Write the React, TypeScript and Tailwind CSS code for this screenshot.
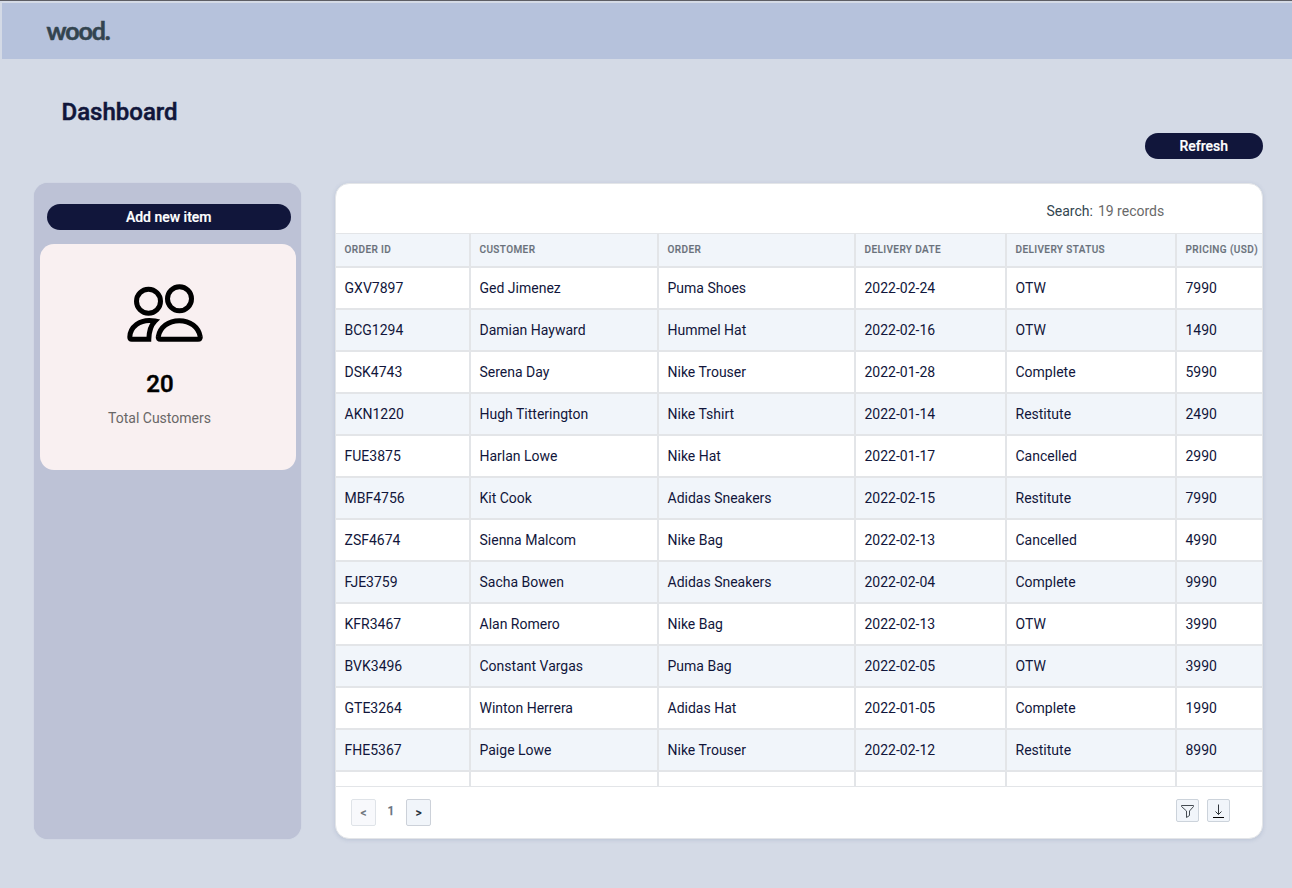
import React from "react";

const cols = ["ORDER ID", "CUSTOMER", "ORDER", "DELIVERY DATE", "DELIVERY STATUS", "PRICING (USD)"];

const rows = [
  ["GXV7897", "Ged Jimenez", "Puma Shoes", "2022-02-24", "OTW", "7990"],
  ["BCG1294", "Damian Hayward", "Hummel Hat", "2022-02-16", "OTW", "1490"],
  ["DSK4743", "Serena Day", "Nike Trouser", "2022-01-28", "Complete", "5990"],
  ["AKN1220", "Hugh Titterington", "Nike Tshirt", "2022-01-14", "Restitute", "2490"],
  ["FUE3875", "Harlan Lowe", "Nike Hat", "2022-01-17", "Cancelled", "2990"],
  ["MBF4756", "Kit Cook", "Adidas Sneakers", "2022-02-15", "Restitute", "7990"],
  ["ZSF4674", "Sienna Malcom", "Nike Bag", "2022-02-13", "Cancelled", "4990"],
  ["FJE3759", "Sacha Bowen", "Adidas Sneakers", "2022-02-04", "Complete", "9990"],
  ["KFR3467", "Alan Romero", "Nike Bag", "2022-02-13", "OTW", "3990"],
  ["BVK3496", "Constant Vargas", "Puma Bag", "2022-02-05", "OTW", "3990"],
  ["GTE3264", "Winton Herrera", "Adidas Hat", "2022-01-05", "Complete", "1990"],
  ["FHE5367", "Paige Lowe", "Nike Trouser", "2022-02-12", "Restitute", "8990"],
  ["", "", "", "", "", ""],
];

const grid = "grid grid-cols-[135px_188px_197px_151px_170px_1fr]";
const cell = "flex items-center whitespace-nowrap border-r-2 border-[#e3e5e8] pl-[8.5px] last:border-r-0";

function PeopleIcon() {
  return (
    <svg width="78" height="60" viewBox="0 0 78 60" fill="none" stroke="#000" strokeWidth="5" strokeLinejoin="round">
      <circle cx="22.5" cy="17.3" r="12" />
      <circle cx="53.5" cy="14.7" r="12" />
      <path d="M29 37C13 34 4 44 3.8 53c0 1.500.8 2.300 2 2.300h17C23 48 25 41 29 37Z" strokeLinejoin="miter" />
      <path d="M34.500 55.300h37.500c1.800 0 2.600-1 2.200-2.700C72.500 43 64 36.700 53.300 36.700S34 43 32.300 52.600c-.4 1.700.4 2.700 2.200 2.700Z" />
    </svg>
  );
}

export default function App() {
  return (
    <div className="flex h-[888px] w-[1292px] flex-col overflow-hidden border-t border-[#5d5e65] bg-[#d4dae6] font-['Roboto',sans-serif] text-[#11163b]">
      <header className="ml-0.5 mt-0.5 flex h-14 shrink-0 items-center bg-[#b6c2dc] pl-[44.5px]">
        <span className="-mt-0.5 font-['Lato',sans-serif] text-[25px] font-bold leading-none tracking-[-1.1px] text-[#33444f] [-webkit-text-stroke:0.5px]">wood.</span>
      </header>
      <h1 className="ml-[61.5px] mt-[37px] h-8 text-2xl font-medium leading-8 [-webkit-text-stroke:0.5px]">Dashboard</h1>
      <div className="mt-[5px] flex justify-end pr-[29.5px]">
        <button className="h-[26px] w-[117.5px] rounded-full bg-[#11163b] text-sm font-medium text-white [-webkit-text-stroke:0.2px]">Refresh</button>
      </div>
      <main className="mt-6 flex gap-[34px] pl-[34px]">
        <aside className="flex h-[656px] w-[267px] flex-col rounded-[14px] bg-[#bdc2d6] pt-[21px] shadow-[0_0_1px_#b5bbd0]">
          <button className="ml-[13px] h-[26px] w-[243.5px] rounded-full bg-[#11163b] text-sm font-medium text-white [-webkit-text-stroke:0.2px]">Add new item</button>
          <section className="ml-1.5 mt-3.5 flex h-[226px] w-[256px] flex-col items-center rounded-[14px] bg-[#f9f0f1] pr-[17px] pt-10">
            <div className="ml-[11px]"><PeopleIcon /></div>
            <p className="ml-px mt-6 text-2xl font-medium leading-8 text-black [-webkit-text-stroke:0.5px]">20</p>
            <p className="mt-2 text-sm leading-5 text-[#696767]">Total Customers</p>
          </section>
        </aside>
        <section className="flex h-[656px] w-[928px] flex-col overflow-hidden rounded-[14px] border border-[#e3e5e8] bg-white shadow-[0_1px_4px_rgba(90,110,150,0.2)]">
          <div className="flex h-[49px] shrink-0 items-center gap-[5px] pl-[710.5px] pt-1 text-sm">
            <span className="text-[#33454f]">Search:</span>
            <span className="text-[#696969]">19 records</span>
          </div>
          <div className="h-[554px] shrink-0 overflow-hidden border-y border-[#e3e5e8]">
            <div className={`${grid} h-[34px] border-b-2 border-[#e3e5e8] bg-[#f1f5fa] text-[10px] font-medium tracking-[0.4px] text-[#69717b] [-webkit-text-stroke:0.15px]`}>
              {cols.map((c) => (
                <div key={c} className={`${cell} pb-0.5`}>{c}</div>
              ))}
            </div>
            {rows.map((r, i) => (
              <div key={i} className={`${grid} h-[42px] border-b-2 border-[#e3e5e8] text-sm ${i % 2 ? "bg-[#f1f5fa]" : "bg-white"}`}>
                {r.map((c, j) => (
                  <div key={j} className={cell}>{c}</div>
                ))}
              </div>
            ))}
          </div>
          <footer className="flex items-start pl-[15px] pr-8 pt-3">
            <button className="h-[27px] w-[25px] rounded-[2px] border border-[#dfe3e8] bg-[#f8f9fc] text-xs font-bold text-[#70777e]">&lt;</button>
            <span className="w-[30px] text-center text-xs font-medium leading-6 text-[#69717b] [-webkit-text-stroke:0.25px]">1</span>
            <button className="h-[27px] w-[25px] rounded-[2px] border border-[#ccd1d9] bg-[#f1f5fa] text-xs font-bold text-[#26323b]">&gt;</button>
            <div className="ml-auto flex gap-2">
              <button className="flex h-[23px] w-[23px] items-center justify-center rounded-[2px] border border-[#ccd3db] bg-[#f1f5fa]">
                <svg width="13" height="14" viewBox="0 0 13 14" fill="none" stroke="#444b52"><path d="M.5 1.500h12v1L8.500 7v4.500L5.500 13.500V7L.5 2.500Z" /></svg>
              </button>
              <button className="flex h-[23px] w-[23px] items-center justify-center rounded-[2px] border border-[#ccd3db] bg-[#f1f5fa]">
                <svg width="13" height="14" viewBox="0 0 13 14" fill="none" stroke="#30363c"><path d="M6.500 .5v10M3.500 7.500l3 3 3-3" /><path d="M1 13.500h11" stroke="#000" /></svg>
              </button>
            </div>
          </footer>
        </section>
      </main>
    </div>
  );
}
